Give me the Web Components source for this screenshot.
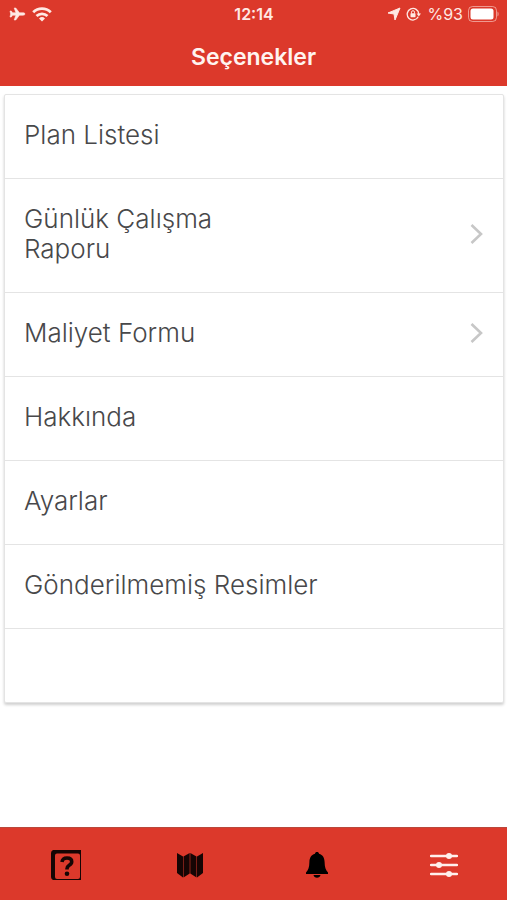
<!DOCTYPE html>
<html lang="tr">
<head>
<meta charset="utf-8">
<meta name="viewport" content="width=device-width, initial-scale=1">
<title>Seçenekler</title>
<style>
  html, body { margin: 0; height: 100%; }
  body { background: #fff; font-family: Inter, "Liberation Sans", sans-serif; }
</style>
</head>
<body>
<options-app></options-app>
<script>
const define = (name, html) => {
  const template = document.createElement('template');
  template.innerHTML = html;
  customElements.define(name, class extends HTMLElement {
    constructor() {
      super();
      this.attachShadow({ mode: 'open' }).append(template.content.cloneNode(true));
    }
  });
};

define('status-bar', `
  <style>
    :host { display: grid; grid-template-columns: 1fr auto 1fr; align-items: center; height: 28px; padding: 0 8px 0 9px; color: #ffe9e4; font-size: 16px; line-height: 20px; }
    .side { display: flex; align-items: center; gap: 6px; }
    .end { justify-content: flex-end; gap: 5px; }
    .time { font-weight: 600; }
    svg { display: block; fill: currentColor; }
  </style>
  <div class="side">
    <svg width="17" height="14" viewBox="0 0 17 14" aria-hidden="true"><path d="M16 7c0 .7-.9 1.2-2 1.2h-3.600L6.800 13H5.200l1.700-4.800H3.600L2.300 10H1l.7-3L1 4h1.300l1.300 1.800h3.300L5.200 1h1.600l3.600 4.800H14c1.100 0 2 .5 2 1.200z" stroke="currentColor" stroke-width=".6"/></svg>
    <svg width="20" height="15" viewBox="0 0 20 15" aria-hidden="true"><g fill="none" stroke="currentColor" stroke-width="2.800"><path d="M1.200 5.300a12.600 12.600 0 0 1 17.600 0M4.500 9a8 8 0 0 1 11 0"/></g><path d="M10 14.500l-3-3.100a4.300 4.300 0 0 1 6 0z"/></svg>
  </div>
  <div class="time">12:14</div>
  <div class="side end">
    <svg width="14" height="14" viewBox="0 0 14 14" aria-hidden="true"><path d="M13 1L8 13 7 7 1 6z" stroke="currentColor" stroke-linejoin="round"/></svg>
    <svg width="16" height="14" viewBox="0 0 16 14" aria-hidden="true"><path d="M12.200 9.800A5.800 5.800 0 1 1 12.800 7" fill="none" stroke="currentColor" stroke-width="1.300"/><path d="M10.600 6.500h4.400l-2.200 3z"/><rect x="4.500" y="6.200" width="5" height="4" rx=".6"/><path d="M5.500 6.500V5.200a1.500 1.500 0 0 1 3 0v1.300" fill="none" stroke="currentColor"/></svg>
    <span>%93</span>
    <svg width="31" height="16" viewBox="0 0 31 16" aria-hidden="true"><rect x=".5" y=".5" width="28" height="15" rx="4" fill="none" stroke="currentColor" opacity=".55"/><rect x="2.500" y="2.500" width="23" height="11" rx="2.500" fill="#fff"/><path d="M29.500 5.500c1.500.8 1.500 4.200 0 5z" opacity=".6"/></svg>
  </div>`);

define('title-bar', `
  <style>
    :host { display: block; padding: 14px 0 14px; text-align: center; }
    h1 { margin: 0; color: #fff4f0; font-size: 23px; line-height: 30px; font-weight: 600; }
  </style>
  <h1><slot></slot></h1>`);

define('option-list', `
  <style>
    :host { display: block; margin: 8px 3px 0 4px; padding-bottom: 73px; border: 1px solid #e4e4e4; border-radius: 2px; background: #fff; box-shadow: 0 2px 3px #00000030; }
  </style>
  <div role="list"><slot></slot></div>`);

const chevron = '<svg width="14" height="22" viewBox="0 0 14 22" aria-hidden="true"><path d="M1.500 2l9.500 9-9.500 9" fill="none" stroke="#c7c7c7" stroke-width="2.600"/></svg>';
const row = (extra, icon) => `
  <style>
    :host { display: block; border-bottom: 1px solid #e4e4e4; }
    button { display: flex; align-items: center; justify-content: space-between; width: 100%; margin: 0; padding: 25px 19px 28px 19px; border: 0; background: none; color: #48484a; font: 300 26px/30px Inter, "Liberation Sans", sans-serif; text-align: left; }
    svg { display: block; flex: none; }
    ${extra}
  </style>
  <button type="button"><span><slot></slot></span>${icon}</button>`;
define('option-row', row('', ''));
define('option-link', row('span { max-width: 58%; }', chevron));

define('tab-button', `
  <style>
    :host { display: block; flex: 1; color: #160504; }
    :host([active]) { color: #fff0ec; }
    button { display: flex; align-items: center; justify-content: center; width: 100%; height: 72px; padding: 2px 0 0; margin: 0; border: 0; background: none; color: inherit; }
  </style>
  <button type="button"><slot></slot></button>`);

define('tab-bar', `
  <style>
    :host { display: flex; border-top: 1px solid #b9483c; background: #dc392b; }
    svg { display: block; }
    .help { margin-left: 5px; }
  </style>
  <tab-button>
    <svg class="help" role="img" aria-label="Yardım" width="32" height="32" viewBox="0 0 32 32"><path fill="currentColor" fill-rule="evenodd" d="M3 1h28v30H3q-2-1-2-3V4q0-2 2-3zM7 4.500q-2 0-2 2V28q0 2 2 2h21q2 0 2-2V6.500q0-2-2-2z"/><path d="M12 13q.5-4 5-4 4.700 0 4.700 3.700 0 2-2.500 3.500-2.200 1.400-2.200 3.600v.7" fill="none" stroke="currentColor" stroke-width="3.600"/><circle cx="17" cy="24.800" r="2.300" fill="currentColor"/></svg>
  </tab-button>
  <tab-button>
    <svg role="img" aria-label="Plan" width="28" height="28" viewBox="0 0 28 28"><g fill="currentColor"><path d="M1 2l6 3.500v21L1 22z"/><path d="M7.500 5.500L13.700 2v20.500l-6.200 4z"/><path d="M14.300 2l6.200 3.500v21l-6.200-4z"/><path d="M21 5.500L27 2v20l-6 4.500z"/></g></svg>
  </tab-button>
  <tab-button>
    <svg role="img" aria-label="Bildirimler" width="24" height="28" viewBox="0 0 24 28"><path fill="#000" d="M12 1c1.200 0 1.900.7 2 1.700 4 1 5.500 4.300 5.600 8.300.1 5 1 8 3.400 10.500V23H1v-1.500C3.400 19 4.300 16 4.400 11 4.500 7 6 3.700 10 2.700 10.100 1.700 10.800 1 12 1zM8.500 24h7a3.600 3.600 0 0 1-7 0z"/></svg>
  </tab-button>
  <tab-button active>
    <svg role="img" aria-label="Seçenekler" width="28" height="28" viewBox="0 0 28 28"><path d="M1 5h26M1 14h26M1 23h26" stroke="currentColor" stroke-width="2.400" stroke-linecap="round"/><g fill="currentColor"><circle cx="19" cy="5" r="3"/><circle cx="9" cy="14" r="3"/><circle cx="19" cy="23" r="3"/></g></svg>
  </tab-button>`);

define('options-app', `
  <style>
    :host { display: flex; flex-direction: column; min-height: 100vh; }
    header { background: #dc392b; }
    main { flex: 1; }
  </style>
  <header>
    <status-bar></status-bar>
    <title-bar>Seçenekler</title-bar>
  </header>
  <main>
    <option-list>
      <option-row role="listitem">Plan Listesi</option-row>
      <option-link role="listitem">Günlük Çalışma Raporu</option-link>
      <option-link role="listitem">Maliyet Formu</option-link>
      <option-row role="listitem">Hakkında</option-row>
      <option-row role="listitem">Ayarlar</option-row>
      <option-row role="listitem">Gönderilmemiş Resimler</option-row>
    </option-list>
  </main>
  <nav><tab-bar></tab-bar></nav>`);
</script>
</body>
</html>
